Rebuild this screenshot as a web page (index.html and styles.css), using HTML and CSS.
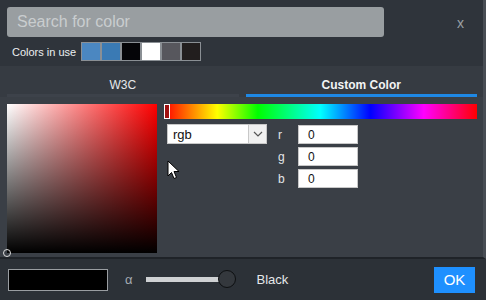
FILE: index.html
```html
<!DOCTYPE html>
<html lang="en">
<head>
  <meta charset="UTF-8">
  <title>Color Picker</title>
  <link rel="stylesheet" href="styles.css">
</head>
<body>
  <div class="picker">
    <div class="top">
      <div class="search-row">
        <input class="search" type="text" placeholder="Search for color">
        <span class="close">x</span>
      </div>
      <div class="used">
        <span class="used-label">Colors in use</span>
        <div class="swatches">
          <span class="swatch" style="background:#4b87c1"></span>
          <span class="swatch" style="background:#3a7ab4"></span>
          <span class="swatch" style="background:#050508"></span>
          <span class="swatch" style="background:#ffffff"></span>
          <span class="swatch" style="background:#57575d"></span>
          <span class="swatch" style="background:#221e1e"></span>
        </div>
      </div>
    </div>

    <div class="tabs">
      <div class="tab">W3C</div>
      <div class="tab active">Custom Color</div>
    </div>

    <div class="body">
      <div class="sv">
        <span class="sv-dot"></span>
      </div>
      <div class="controls">
        <div class="hue"><span class="hue-mark"></span></div>
        <div class="fields">
          <div class="select">
            <span class="select-text">rgb</span>
            <span class="select-btn">
              <svg width="10" height="6" viewBox="0 0 10 6"><path d="M1 1 L5 5 L9 1" fill="none" stroke="#555" stroke-width="1.2"/></svg>
            </span>
          </div>
          <div class="channels">
            <div class="channel"><span class="ch-label">r</span><span class="ch-input">0</span></div>
            <div class="channel"><span class="ch-label">g</span><span class="ch-input">0</span></div>
            <div class="channel"><span class="ch-label">b</span><span class="ch-input">0</span></div>
          </div>
        </div>
      </div>
      <svg class="cursor" width="14" height="20" viewBox="0 0 14 20">
        <path d="M1 1 L1 16 L4.5 12.5 L7 18.5 L9.5 17.5 L7 11.5 L12 11.5 Z" fill="#fff" stroke="#000" stroke-width="1"/>
      </svg>
    </div>

    <div class="footer">
      <div class="preview"></div>
      <span class="alpha">&alpha;</span>
      <div class="slider"><span class="thumb"></span></div>
      <span class="name">Black</span>
      <button class="ok">OK</button>
    </div>
  </div>
</body>
</html>
```

FILE: styles.css
```css
* {
  box-sizing: border-box;
  font-family: 'Liberation Sans', Arial, sans-serif;
}

body {
  margin: 0;
  background: #2c3137;
}

.picker {
  width: 486px;
  height: 300px;
  display: flex;
  flex-direction: column;
  position: relative;
}

.top {
  height: 66px;
  background: #2f343b;
  border-right: 3px solid #484d54;
  padding: 7px 0 0 7px;
}

.search-row {
  display: flex;
  align-items: center;
}

.search {
  width: 377px;
  height: 30px;
  border: none;
  border-radius: 3px;
  background: #999ea1;
  padding: 0 10px;
  font-size: 16px;
  outline: none;
}

.search::placeholder {
  color: #c9cdcf;
}

.close {
  margin-left: 73px;
  margin-top: 2px;
  color: #9aa0a5;
  font-size: 14px;
}

.used {
  display: flex;
  align-items: center;
  margin-top: 5px;
}

.used-label {
  color: #eceff1;
  font-size: 11px;
  padding-left: 5px;
  width: 74px;
}

.swatches {
  display: flex;
}

.swatch {
  width: 20px;
  height: 19px;
  border: 1px solid #8a8f94;
}

.tabs {
  height: 31px;
  background: #363b42;
  border-right: 3px solid #484d54;
  display: flex;
  padding: 0 6px 0 7px;
  gap: 7px;
}

.tab {
  flex: 1;
  text-align: center;
  color: #e6e9eb;
  font-size: 12px;
  padding-top: 12px;
  border-bottom: 3px solid #3d424a;
}

.tab.active {
  font-weight: bold;
  color: #f2f4f5;
  border-bottom-color: #1e88e5;
}

.body {
  flex: 1;
  background: #3a3f46;
  border-right: 3px solid #484d54;
  border-bottom: 2px solid #1f2328;
  display: flex;
  padding: 7px 0 0 7px;
  gap: 7px;
  position: relative;
}

.sv {
  width: 150px;
  height: 149px;
  background:
    linear-gradient(to top, #000 0%, rgba(0, 0, 0, 0.55) 45%, rgba(0, 0, 0, 0) 100%),
    linear-gradient(to right, #fff, #f00);
  position: relative;
}

.sv-dot {
  position: absolute;
  left: -4px;
  bottom: -4px;
  width: 8px;
  height: 8px;
  border-radius: 50%;
  border: 1.5px solid #ddd;
}

.controls {
  width: 313px;
}

.hue {
  height: 15px;
  background: linear-gradient(to right, #f00 0%, #ff0 17%, #0f0 30%, #0ff 50%, #00f 66%, #f0f 83%, #f00 100%);
  position: relative;
}

.hue-mark {
  position: absolute;
  left: 0;
  top: 0;
  width: 6px;
  height: 15px;
  border: 1px solid #fff;
  background: #a01010;
}

.fields {
  display: flex;
  padding: 5px 0 0 3px;
}

.select {
  width: 100px;
  height: 20px;
  background: #fff;
  border: 1px solid #c8c8c8;
  display: flex;
  align-items: center;
}

.select-text {
  flex: 1;
  padding-left: 5px;
  font-size: 13px;
  color: #111;
}

.select-btn {
  width: 18px;
  height: 18px;
  background: #f0f0f0;
  border-left: 1px solid #c8c8c8;
  display: flex;
  align-items: center;
  justify-content: center;
}

.channels {
  margin-left: 11px;
  display: flex;
  flex-direction: column;
  gap: 3px;
  padding-top: 1px;
}

.channel {
  display: flex;
  align-items: center;
}

.ch-label {
  width: 20px;
  color: #e3e6e8;
  font-size: 12px;
}

.ch-input {
  width: 60px;
  height: 19px;
  background: #fff;
  border: 1px solid #c8c8c8;
  font-size: 12px;
  color: #111;
  padding: 2px 0 0 9px;
}

.cursor {
  position: absolute;
  left: 167px;
  top: 63px;
}

.footer {
  height: 41px;
  background: #2c3137;
  display: flex;
  align-items: center;
  padding: 0 11px 0 8px;
}

.preview {
  width: 100px;
  height: 22px;
  background: #000;
  border: 1px solid #9a9ea2;
}

.alpha {
  margin-left: 17px;
  color: #a3aab2;
  font-size: 13px;
}

.slider {
  margin-left: 13px;
  width: 80px;
  height: 5px;
  background: #cfd1d3;
  position: relative;
}

.thumb {
  position: absolute;
  right: -10px;
  top: -7px;
  width: 18px;
  height: 18px;
  border-radius: 50%;
  background: #34383d;
  border: 1.5px solid #0d0f11;
}

.name {
  margin-left: 31px;
  color: #e4e7e9;
  font-size: 13px;
}

.ok {
  margin-left: auto;
  width: 41px;
  height: 26px;
  border: none;
  background: #1e90ff;
  color: #fff;
  font-size: 15px;
  padding: 0;
}
```
